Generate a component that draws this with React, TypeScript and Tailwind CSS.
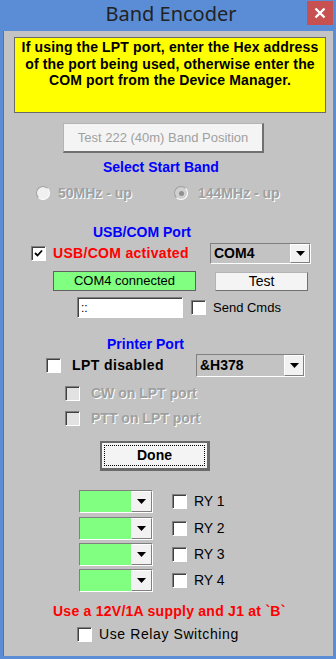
import React from "react";

const sunken =
  "border border-t-[#808080] border-l-[#808080] border-r-white border-b-white";

function Check({ checked = false, disabled = false }: { checked?: boolean; disabled?: boolean }) {
  return (
    <div
      className={`w-[15px] h-[15px] shrink-0 ${sunken} ${disabled ? "bg-[#e2e2e2]" : "bg-white"} shadow-[inset_1px_1px_0_#404040] flex items-center justify-center`}
    >
      {checked && (
        <svg width="9" height="9" viewBox="0 0 9 9">
          <path d="M1 4 L3.5 6.5 L8 1.5" stroke="#000" strokeWidth="1.8" fill="none" />
        </svg>
      )}
    </div>
  );
}

function Radio({ dot = false }: { dot?: boolean }) {
  return (
    <div
      className={`w-[14px] h-[14px] rounded-full shrink-0 border border-t-[#a0a0a0] border-l-[#a0a0a0] border-r-white border-b-white ${dot ? "bg-[#d0d0d0]" : "bg-[#f0f0f0]"} flex items-center justify-center`}
    >
      {dot && <div className="w-[5px] h-[5px] rounded-full bg-[#909090]" />}
    </div>
  );
}

function Arrow() {
  return (
    <svg width="9" height="5" viewBox="0 0 9 5">
      <path d="M0 0 H9 L4.5 5 Z" fill="#000" />
    </svg>
  );
}

function Combo({
  w,
  h,
  text,
  green = false,
  btnW = 20,
}: {
  w: string;
  h: string;
  text?: string;
  green?: boolean;
  btnW?: number;
}) {
  return (
    <div className={`${w} ${h} shrink-0 ${sunken} shadow-[inset_1px_1px_0_#404040] flex`}>
      <div
        className={`flex-1 flex items-center pl-[3px] font-bold text-[14px] text-black ${green ? "bg-[#80ff80]" : "bg-[#c3c3c3]"}`}
      >
        {text}
      </div>
      <div
        style={{ width: btnW }}
        className="h-full bg-[#f2f2f2] border border-t-white border-l-white border-r-[#808080] border-b-[#808080] flex items-center justify-center"
      >
        <Arrow />
      </div>
    </div>
  );
}

const emboss = "text-[#a0a0a0] [text-shadow:1px_1px_0_#ffffff]";

export default function App() {
  return (
    <div className="w-[336px] h-[659px] bg-[#5b8dd6] flex flex-col font-['Liberation_Sans',Arial,sans-serif] overflow-hidden">
      <div className="h-[31px] shrink-0 relative flex items-center justify-center">
        <span className="font-['Noto_Sans',sans-serif] text-[20px] text-[#222] leading-none -mt-[3px] ml-[6px]">
          Band Encoder
        </span>
        <div className="absolute right-[3px] top-[1px] w-[26px] h-[24px] bg-[#c75050] flex items-center justify-center">
          <svg width="12" height="12" viewBox="0 0 12 12">
            <path d="M1.5 1.5 L10.5 10.5 M10.5 1.5 L1.5 10.5" stroke="#fff" strokeWidth="2.4" />
          </svg>
        </div>
      </div>
      <div className="flex-1 mx-[3px] mb-[3px] bg-[#c3c3c3] flex flex-col border-l border-[#4a78b8]">
        {/* Yellow note */}
        <div className="mt-[6px] ml-[10px] w-[312px] h-[76px] bg-[#ffff00] border border-[#6a6a6a] text-center font-bold text-[14px] leading-[16.5px] text-black pt-[1px] tracking-[0.15px]">
          If using the LPT port, enter the Hex address
          <br />
          of the port being used, otherwise enter the
          <br />
          COM port from the Device Manager.
        </div>

        {/* Test button */}
        <div className="mt-[10px] ml-[59px] w-[201px] h-[30px] bg-[#f4f4f4] border border-[#b4b4b4] border-r-2 border-b-2 border-r-[#707070] border-b-[#707070] flex items-center justify-center text-[13px] text-[#a0a0a0]">
          Test 222 (40m) Band Position
        </div>

        <div className="mt-[6px] ml-[99px] h-[16px] leading-[16px] font-bold text-[14px] text-[#0000ff]">
          Select Start Band
        </div>

        <div className="mt-[10px] h-[16px] flex items-center">
          <div className="ml-[32px]">
            <Radio />
          </div>
          <div className={`ml-[8px] w-[116px] font-bold text-[14px] ${emboss}`}>50MHz - up</div>
          <Radio dot />
          <div className={`ml-[10px] font-bold text-[14px] ${emboss}`}>144MHz - up</div>
        </div>

        <div className="mt-[23px] ml-[89px] h-[16px] leading-[16px] font-bold text-[14px] text-[#0000ff]">
          USB/COM Port
        </div>

        <div className="mt-[3px] h-[21px] flex items-center">
          <div className="ml-[27px]">
            <Check checked />
          </div>
          <div className="ml-[7px] w-[157px] font-bold text-[14px] text-[#ff0000] tracking-[0.3px]">
            USB/COM activated
          </div>
          <Combo w="w-[101px]" h="h-[21px]" text="COM4" />
        </div>

        <div className="mt-[7px] h-[20px] flex items-center">
          <div className="ml-[49px] w-[143px] h-[20px] bg-[#80ff80] border border-[#606060] flex items-center justify-center text-[13px] text-black">
            COM4 connected
          </div>
          <div className="ml-[19px] w-[93px] h-[19px] bg-[#f4f4f4] border border-[#b4b4b4] border-r-[#707070] border-b-[#707070] flex items-center justify-center text-[14px] text-black">
            Test
          </div>
        </div>

        <div className="mt-[6px] h-[21px] flex items-center">
          <div className={`ml-[73px] w-[106px] h-[21px] bg-white ${sunken} shadow-[inset_1px_1px_0_#404040] flex items-center pl-[3px] text-[12px] text-black leading-none`}>
            ::
          </div>
          <div className="ml-[8px]">
            <Check />
          </div>
          <div className="ml-[7px] text-[13px] text-black">Send Cmds</div>
        </div>

        <div className="mt-[18px] ml-[103px] h-[16px] leading-[16px] font-bold text-[14px] text-[#0000ff]">
          Printer Port
        </div>

        <div className="mt-[2px] h-[23px] flex items-center">
          <div className="ml-[42px]">
            <Check />
          </div>
          <div className="ml-[11px] w-[124px] font-bold text-[14px] text-black tracking-[0.4px]">
            LPT disabled
          </div>
          <Combo w="w-[109px]" h="h-[23px]" text="&H378" />
        </div>

        <div className="mt-[9px] h-[15px] flex items-center">
          <div className="ml-[61px]">
            <Check disabled />
          </div>
          <div className={`ml-[11px] font-bold text-[14px] ${emboss}`}>CW on LPT port</div>
        </div>

        <div className="mt-[10px] h-[15px] flex items-center">
          <div className="ml-[61px]">
            <Check disabled />
          </div>
          <div className={`ml-[11px] font-bold text-[14px] ${emboss}`}>PTT on LPT port</div>
        </div>

        <div className="mt-[15px] ml-[96px] w-[110px] h-[30px] bg-[#f4f4f4] border-2 border-[#6a6a6a] border-r-[3px] border-b-[3px] p-[2px]">
          <div className="w-full h-full border border-dotted border-black flex items-center justify-center font-bold text-[14px] text-black">
            Done
          </div>
        </div>

        {[1, 2, 3, 4].map((n, i) => (
          <div
            key={n}
            className={`${i === 0 ? "mt-[19px]" : i === 1 ? "mt-[4px]" : "mt-[3px]"} h-[23px] flex items-center`}
          >
            <div className="ml-[75px]">
              <Combo w="w-[74px]" h="h-[23px]" green btnW={21} />
            </div>
            <div className="ml-[19px]">
              <Check />
            </div>
            <div className="ml-[7px] text-[14px] text-black">RY {n}</div>
          </div>
        ))}

        <div className="mt-[11px] ml-[49px] h-[16px] leading-[16px] font-bold text-[14px] text-[#ff0000] tracking-[0.25px]">
          Use a 12V/1A supply and J1 at `B`
        </div>

        <div className="mt-[8px] h-[15px] flex items-center">
          <div className="ml-[73px]">
            <Check />
          </div>
          <div className="ml-[7px] text-[14px] text-black tracking-[0.6px]">Use Relay Switching</div>
        </div>
      </div>
    </div>
  );
}
